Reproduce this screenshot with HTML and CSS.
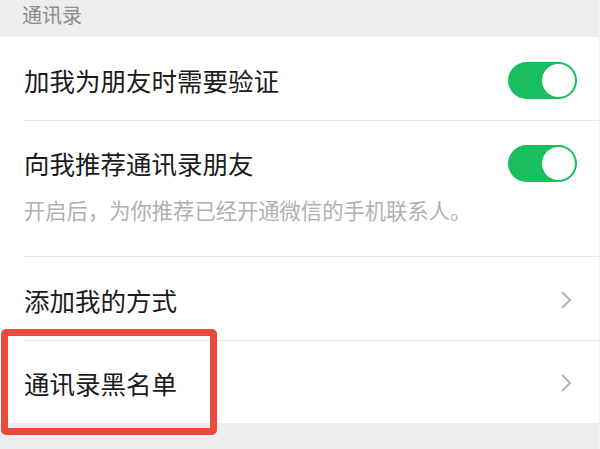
FILE: index.html
```html
<!DOCTYPE html>
<html lang="zh-CN">
<head>
<meta charset="utf-8">
<link rel="stylesheet" href="styles.css">
</head>
<body>
<div class="page">
  <div class="header">通讯录</div>
  <div class="list">
    <div class="row row1">
      <span class="title">加我为朋友时需要验证</span>
      <span class="switch"></span>
    </div>
    <div class="row row2">
      <div class="line">
        <span class="title">向我推荐通讯录朋友</span>
        <span class="switch"></span>
      </div>
      <div class="sub">开启后，为你推荐已经开通微信的手机联系人。</div>
    </div>
    <div class="row row3">
      <span class="title">添加我的方式</span>
      <svg class="chev" width="12" height="20" viewBox="0 0 12 20"><polyline points="2,2 10,10 2,18" fill="none" stroke="#b4b4b4" stroke-width="2"/></svg>
    </div>
    <div class="row row4">
      <span class="title">通讯录黑名单</span>
      <svg class="chev" width="12" height="20" viewBox="0 0 12 20"><polyline points="2,2 10,10 2,18" fill="none" stroke="#b4b4b4" stroke-width="2"/></svg>
    </div>
  </div>
  <div class="highlight"></div>
</div>
</body>
</html>
```

FILE: styles.css
```css
html, body {
  margin: 0;
  padding: 0;
}
body {
  background: #ededed;
  font-family: "Noto Sans CJK SC", "Noto Sans", sans-serif;
  width: 600px;
  height: 449px;
  overflow: hidden;
}
.page {
  position: relative;
  width: 600px;
  height: 449px;
  border-right: 1px solid #f3f3f3;
  box-sizing: border-box;
}
.header {
  height: 37px;
  padding-left: 22px;
  font-size: 20px;
  line-height: 30px;
  color: #8c8c8c;
  box-sizing: border-box;
}
.list {
  background: #ffffff;
}
.row {
  margin-left: 24px;
  padding-right: 22px;
  border-bottom: 1px solid #e8e8e8;
  display: flex;
  align-items: center;
  justify-content: space-between;
  box-sizing: border-box;
}
.row1 {
  height: 84px;
  padding-top: 3px;
}
.row2 {
  height: 136px;
  flex-direction: column;
  align-items: stretch;
  justify-content: flex-start;
  padding-top: 24px;
}
.row3 {
  height: 84px;
  padding-top: 3px;
  padding-right: 27px;
}
.row4 {
  height: 82px;
  border-bottom: none;
  padding-top: 2px;
  padding-right: 27px;
}
.line {
  display: flex;
  align-items: center;
  justify-content: space-between;
  height: 36px;
}
.title {
  font-size: 25.5px;
  line-height: 36px;
  color: #1b1b1b;
}
.sub {
  margin-top: 15px;
  font-size: 21.3px;
  line-height: 28px;
  color: #b0b0b0;
  white-space: nowrap;
}
.switch {
  position: relative;
  width: 69px;
  height: 37px;
  border-radius: 19px;
  background: #17bf5f;
  flex: none;
}
.switch::after {
  content: "";
  position: absolute;
  right: 2px;
  top: 2px;
  width: 33px;
  height: 33px;
  border-radius: 50%;
  background: #ffffff;
}
.chev {
  display: block;
  flex: none;
}
.highlight {
  position: absolute;
  left: 1px;
  top: 329px;
  width: 216px;
  height: 106px;
  border: 7px solid #e84b3c;
  border-radius: 5px;
  box-sizing: border-box;
}
```
